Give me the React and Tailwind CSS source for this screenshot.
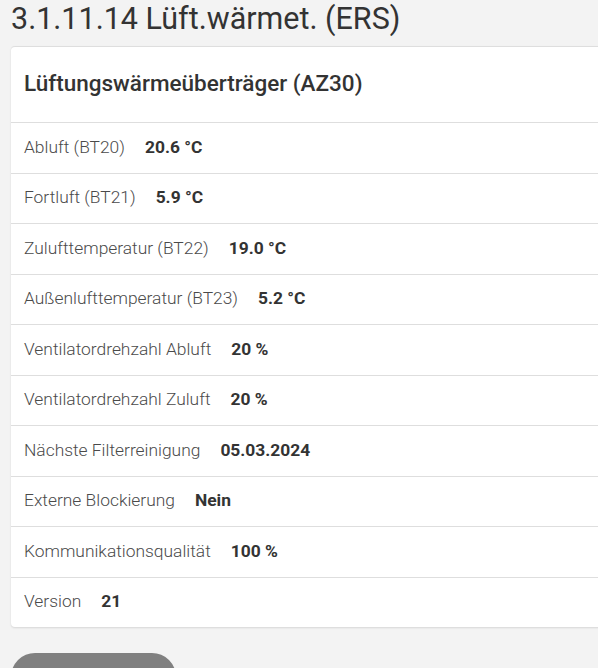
const rows = [
  { label: "Abluft (BT20)", value: "20.6 °C" },
  { label: "Fortluft (BT21)", value: "5.9 °C" },
  { label: "Zulufttemperatur (BT22)", value: "19.0 °C" },
  { label: "Außenlufttemperatur (BT23)", value: "5.2 °C" },
  { label: "Ventilatordrehzahl Abluft", value: "20 %" },
  { label: "Ventilatordrehzahl Zuluft", value: "20 %" },
  { label: "Nächste Filterreinigung", value: "05.03.2024" },
  { label: "Externe Blockierung", value: "Nein" },
  { label: "Kommunikationsqualität", value: "100 %" },
  { label: "Version", value: "21" },
];

const App = () => {
  return (
    <div className="h-[668px] overflow-hidden bg-[#f3f3f3] font-['Roboto',sans-serif]">
      <h1 className="pl-[11px] pt-[1px] text-[30.5px] leading-[36px] text-[#333]">3.1.11.14 Lüft.wärmet. (ERS)</h1>

      <section className="ml-[11px] mt-[9px] w-[600px] rounded-[4px] border-t border-[#dedede] bg-white shadow-[0_1px_2px_rgba(0,0,0,0.12)]">
        <div className="flex h-[75px] items-center px-[13px] pb-[1px]">
          <h2 className="text-[22.5px] font-medium text-[#333]">Lüftungswärmeüberträger (AZ30)</h2>
        </div>
        {rows.map((row) => (
          <div className="flex h-[50.5px] items-center gap-[20px] border-t border-[#dedede] px-[13px] pb-[2px] text-[17.4px]" key={row.label}>
            <span className="font-light text-[#4a4a4a]">{row.label}</span>
            <span className="font-bold text-[#333]">{row.value}</span>
          </div>
        ))}
      </section>

      <button className="ml-[11px] mt-[26px] h-[56px] w-[165px] rounded-[24px] bg-[#808080] text-[17px] text-white" type="button">
        Zurück
      </button>
    </div>
  );
};

export default App;
